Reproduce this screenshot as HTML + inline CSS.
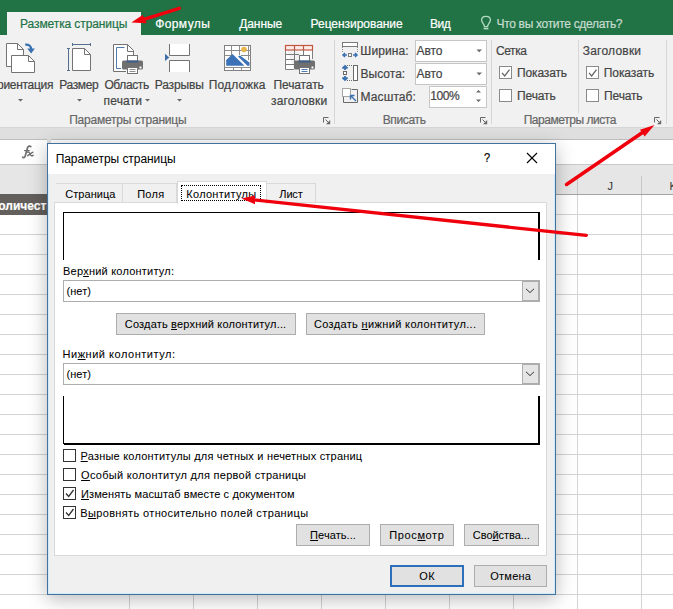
<!DOCTYPE html>
<html><head><meta charset="utf-8">
<style>
*{margin:0;padding:0;box-sizing:border-box}
html,body{width:673px;height:609px;overflow:hidden;background:#fff}
body{position:relative;font-family:"Liberation Sans",sans-serif;font-size:11.5px;color:#444}
.a{position:absolute}
.t{position:absolute;white-space:nowrap;line-height:14px;-webkit-text-stroke:0.2px currentColor}
svg{position:absolute;overflow:visible}
u{text-decoration:underline;text-decoration-thickness:1px;text-underline-offset:1px}
</style></head><body>

<!-- ===== green tab bar ===== -->
<div class="a" style="left:0;top:0;width:673px;height:35px;background:#217346"></div>
<div class="a" style="left:7px;top:12px;width:134px;height:23px;background:#f1f1f1"></div>
<div class="t" style="left:20.10px;top:16.80px;font-size:12px;color:#217346;letter-spacing:-0.101px;">Разметка страницы</div>
<div class="t" style="left:155.25px;top:17.00px;font-size:12px;color:#fff;letter-spacing:0.384px;">Формулы</div>
<div class="t" style="left:239.25px;top:17.00px;font-size:12px;color:#fff;letter-spacing:-0.1px;">Данные</div>
<div class="t" style="left:310.60px;top:16.80px;font-size:12px;color:#fff;letter-spacing:-0.045px;">Рецензирование</div>
<div class="t" style="left:430.00px;top:16.80px;font-size:12px;color:#fff;letter-spacing:-0.45px;">Вид</div>
<svg style="left:0;top:0" width="673" height="609"><path d="M484.4 26.6 C484.4 23.6 481.6 22.6 481.6 19.9 C481.6 17.6 483.6 16.3 486 16.3 C488.4 16.3 490.4 17.6 490.4 19.9 C490.4 22.6 487.6 23.6 487.6 26.6 Z" fill="none" stroke="#b4dcc1" stroke-width="1.3"/><path d="M483.6 28.6 H488.4" stroke="#b4dcc1" stroke-width="1.6"/></svg>
<div class="t" style="left:496.50px;top:16.50px;font-size:12px;color:#c8dccf;letter-spacing:-0.315px;">Что вы хотите сделать?</div>

<!-- ===== ribbon ===== -->
<div class="a" style="left:0;top:35px;width:673px;height:93px;background:#f1f1f1;border-bottom:1px solid #d6d6d6"></div>
<div class="a" style="left:0;top:128px;width:673px;height:12px;background:#dfdfdf"></div>


<!-- ribbon texts -->
<div class="t" style="left:-12.00px;top:77.60px;font-size:12px;color:#444;letter-spacing:-0.3px;">Ориентация</div>
<div class="t" style="left:59.30px;top:77.60px;font-size:12px;color:#444;letter-spacing:-0.36px;">Размер</div>
<div class="t" style="left:104.40px;top:77.60px;font-size:12px;color:#444;letter-spacing:-0.384px;">Область</div>
<div class="t" style="left:103.60px;top:93.60px;font-size:12px;color:#444;letter-spacing:0.16px;">печати</div>
<div class="t" style="left:154.65px;top:77.60px;font-size:12px;color:#444;letter-spacing:-0.116px;">Разрывы</div>
<div class="t" style="left:208.85px;top:77.60px;font-size:12px;color:#444;letter-spacing:0.101px;">Подложка</div>
<div class="t" style="left:273.50px;top:77.60px;font-size:12px;color:#444;letter-spacing:-0.115px;">Печатать</div>
<div class="t" style="left:271.05px;top:93.60px;font-size:12px;color:#444;letter-spacing:0.164px;">заголовки</div>
<div class="t" style="left:69.15px;top:112.90px;font-size:12px;color:#666;letter-spacing:-0.206px;">Параметры страницы</div>
<div class="t" style="left:360.35px;top:44.40px;font-size:12px;color:#444;letter-spacing:0.083px;">Ширина:</div>
<div class="t" style="left:360.60px;top:66.80px;font-size:12px;color:#444;letter-spacing:0px;">Высота:</div>
<div class="t" style="left:360.55px;top:89.80px;font-size:12px;color:#444;letter-spacing:0.101px;">Масштаб:</div>
<div class="t" style="left:382.65px;top:112.90px;font-size:12px;color:#666;letter-spacing:-0.35px;">Вписать</div>
<div class="a" style="left:414.5px;top:39.5px;width:72px;height:22px;background:#fff;border:1px solid #c6c6c6"></div>
<div class="a" style="left:414.5px;top:62.5px;width:72px;height:22px;background:#fff;border:1px solid #c6c6c6"></div>
<div class="a" style="left:428.5px;top:85.5px;width:58px;height:22px;background:#fff;border:1px solid #c6c6c6"></div>
<div class="t" style="left:416.60px;top:44.00px;font-size:12px;color:#444;letter-spacing:-0.066px;">Авто</div>
<div class="t" style="left:416.60px;top:67.00px;font-size:12px;color:#444;letter-spacing:-0.066px;">Авто</div>
<div class="t" style="left:430.25px;top:89.20px;font-size:12px;color:#444;letter-spacing:-0.45px;">100%</div>
<div class="t" style="left:496.05px;top:43.60px;font-size:12px;color:#444;letter-spacing:-0.45px;">Сетка</div>
<div class="t" style="left:517.00px;top:66.40px;font-size:12px;color:#444;letter-spacing:-0.143px;">Показать</div>
<div class="t" style="left:517.05px;top:88.60px;font-size:12px;color:#444;letter-spacing:-0.14px;">Печать</div>
<div class="t" style="left:582.70px;top:43.60px;font-size:12px;color:#444;letter-spacing:0.225px;">Заголовки</div>
<div class="t" style="left:603.80px;top:66.40px;font-size:12px;color:#444;letter-spacing:-0.086px;">Показать</div>
<div class="t" style="left:604.10px;top:88.60px;font-size:12px;color:#444;letter-spacing:-0.16px;">Печать</div>
<div class="t" style="left:523.70px;top:112.80px;font-size:12px;color:#666;letter-spacing:-0.45px;">Параметры листа</div>

<svg style="left:0;top:0" width="673" height="609" viewBox="0 0 673 609">
 <g fill="none" stroke-width="1">
  <!-- separators -->
  <path d="M334.5 40 V124 M491.5 40 V124 M578.5 40 V113 M666.5 40 V124" stroke="#d6d6d6"/>
  <!-- orientation -->
  <path d="M6.5 43.5 H17.5 L23.5 49.5 V66.5 H6.5 Z" fill="#fff" stroke="#737373"/>
  <path d="M17.5 43.5 V49.5 H23.5" stroke="#737373"/>
  <path d="M11.5 55.5 H28.5 L34.5 61.5 V72.5 H11.5 Z" fill="#fff" stroke="#737373"/>
  <path d="M28.5 55.5 V61.5 H34.5" stroke="#737373"/>
  <path d="M25.2 44.6 C28.8 44.2 31.2 45.8 31.2 49.5" stroke="#3a70b0" stroke-width="2.2"/>
  <path d="M27.3 48.6 L34.9 48.6 L31.1 53.6 Z" fill="#3a70b0" stroke="none"/>
  <!-- size -->
  <path d="M72.5 44.5 H90.5 M72.5 43 V46 M90.5 43 V46 M68.5 48.5 V70.5 M67 48.5 H70 M67 70.5 H70" stroke="#55708f"/>
  <path d="M72.5 48.5 H84.5 L90.5 54.5 V70.5 H72.5 Z" fill="#fff" stroke="#737373"/>
  <path d="M84.5 48.5 V54.5 H90.5" stroke="#737373"/>
  <!-- print area -->
  <path d="M126 71.5 H113.5 V44.5 H127.5 L133.5 50.5 V58" fill="#fff" stroke="#737373"/>
  <path d="M127.5 44.5 V51.5 H133.5" stroke="#737373"/>
  <path d="M124.5 47.5 H116.5 V68.5 H121" stroke="#4f7bb0"/>
  <rect x="127.5" y="55.5" width="10" height="6" fill="#fff" stroke="#737373"/>
  <rect x="122" y="60.5" width="21" height="9" rx="1.5" fill="#707070" stroke="none"/>
  <path d="M126.5 61.5 H138.5" stroke="#3d5f8a" stroke-width="2"/>
  <rect x="127.5" y="67.5" width="10" height="6" fill="#fff" stroke="#737373"/>
  <path d="M129.5 69.5 H135.5 M129.5 71.5 H135.5" stroke="#8d8d8d"/>
  <rect x="139.5" y="66.5" width="2" height="2" fill="#fff" stroke="none"/>
  <!-- breaks -->
  <path d="M169.5 44 V55.5 H189.5 V44" fill="#fff" stroke="#737373"/>
  <path d="M169.5 72 V60.5 H189.5 V72" fill="#fff" stroke="#737373"/>
  <path d="M165 53.8 L169.3 57.4 L165 61 Z" fill="#3d6fa8" stroke="none"/>
  <!-- background -->
  <rect x="224.5" y="45.5" width="26" height="25" fill="#fff" stroke="#808080"/>
  <path d="M231.5 45.5 V55 M239.5 45.5 V55 M248.5 45.5 V60 M224.5 50.5 H250.5 M224.5 55.5 H233 M241 55.5 H250.5 M224.5 67.5 H250.5 M233.5 67.5 V70.5 M241.5 67.5 V70.5" stroke="#8c8c8c"/>
  <path d="M226.2 60 L232.5 54 L244.5 65.8 H226.2 Z" fill="#3c72b8" stroke="none"/>
  <path d="M238 56.6 L240 55.4 L249.5 62.6 V65.8 H247.4 Z" fill="#3c72b8" stroke="none"/>
  <circle cx="244" cy="49.5" r="2.8" fill="#e8b54d" stroke="none"/>
  <!-- print titles -->
  <path d="M285.5 45.5 H312.5 V59 M285.5 45.5 V69.5 H294" stroke="#808080" fill="#fff"/>
  <rect x="285.5" y="45.5" width="27" height="4.5" fill="#fbeeea" stroke="#c4553e" stroke-width="1.2"/>
  <path d="M294.5 45.5 V50 M303.5 45.5 V50" stroke="#c4553e" stroke-width="1.2"/>
  <path d="M294.5 50 V62 M303.5 50 V56 M285.5 54.5 H299 M285.5 59.5 H294 M285.5 64.5 H294" stroke="#7a7a7a"/>
  <rect x="299.5" y="55.5" width="10" height="6" fill="#fff" stroke="#737373"/>
  <rect x="294" y="60.5" width="21" height="9" rx="1.5" fill="#707070" stroke="none"/>
  <path d="M298.5 61.5 H310.5" stroke="#3d5f8a" stroke-width="2"/>
  <rect x="299.5" y="67.5" width="10" height="6" fill="#fff" stroke="#737373"/>
  <path d="M301.5 69.5 H307.5 M301.5 71.5 H307.5" stroke="#4f7bb0"/>
  <rect x="311.5" y="66.5" width="2" height="2" fill="#fff" stroke="none"/>
  <!-- dropdown arrows -->
  <path d="M18 99 H23 L20.5 101.5 Z M77 99 H82 L79.5 101.5 Z M145 99 H150 L147.5 101.5 Z M177 99 H182 L179.5 101.5 Z" fill="#666" stroke="none"/>
  <path d="M476.5 49.5 H482 L479.2 52.3 Z M476.5 72.5 H482 L479.2 75.3 Z M476 92.5 H481 L478.5 90 Z M476 99.5 H481 L478.5 102 Z" fill="#666" stroke="none"/>
  <!-- launchers -->
  <path d="M323.5 122.5 V117.5 H328.5 M325.5 119.5 L328 122" stroke="#666"/><path d="M330.2 124.2 H326 L330.2 120 Z" fill="#666" stroke="none"/>
  <path d="M480.5 122.5 V117.5 H485.5 M482.5 119.5 L485 122" stroke="#666"/><path d="M487.2 124.2 H483 L487.2 120 Z" fill="#666" stroke="none"/>
  <path d="M654.5 122.5 V117.5 H659.5 M656.5 119.5 L659 122" stroke="#666"/><path d="M661.2 124.2 H657 L661.2 120 Z" fill="#666" stroke="none"/>
  <!-- fit icons -->
  <rect x="342.5" y="42.5" width="15" height="4" fill="#fff" stroke="#7a7a7a"/>
  <path d="M342.5 47 V52 M357.5 47 V52" stroke="#8a8a8a" stroke-dasharray="1 1"/>
  <rect x="348.5" y="53.5" width="3" height="3" fill="#fff" stroke="#7a7a7a"/>
  <path d="M343 55 H347 M345 53 L343 55 L345 57 M353 55 H357 M355 53 L357 55 L355 57" stroke="#3a70b0" stroke-width="1.5"/>
  <rect x="353.5" y="65.5" width="4" height="15" fill="#fff" stroke="#6a6a6a"/>
  <path d="M347 65.5 H352 M347 80.5 H352" stroke="#6a6a6a" stroke-dasharray="1 1"/>
  <rect x="343.5" y="71.5" width="3" height="3" fill="#fff" stroke="#6a6a6a"/>
  <path d="M345 66 V70 M342.5 68.5 L345 66 L347.5 68.5 M345 76 V80 M342.5 77.5 L345 80 L347.5 77.5" stroke="#3a6fb0" stroke-width="1.8"/>
  <path d="M343.5 97 V102.5 H357.5 V89.5 H351.5" fill="none" stroke="#6a6a6a"/>
  <rect x="342.5" y="88.5" width="8" height="8" fill="#fff" stroke="#555" stroke-dasharray="1 1"/>
  <path d="M356 101 L351 96 M350.5 99.5 V95.5 H354.5" stroke="#3a6fb0" stroke-width="1.4"/>
  <!-- checkboxes -->
  <rect x="499.5" y="66.5" width="12" height="12" fill="#fff" stroke="#8a8a8a"/>
  <rect x="499.5" y="89.5" width="12" height="12" fill="#fff" stroke="#8a8a8a"/>
  <rect x="586.5" y="66.5" width="12" height="12" fill="#fff" stroke="#8a8a8a"/>
  <rect x="586.5" y="89.5" width="12" height="12" fill="#fff" stroke="#8a8a8a"/>
  <path d="M502 72.8 L504.7 76 L509.5 69.6 M589 72.8 L591.7 76 L596.5 69.6" stroke="#666" stroke-width="1.3"/>
 </g>
</svg>


<!-- ===== formula bar ===== -->
<div class="a" style="left:0;top:139px;width:673px;height:26px;background:#fff;border-top:1px solid #bdbdbd;border-bottom:1px solid #c8c8c8"></div>
<div class="a" style="left:46.5px;top:139px;width:4px;height:26px;background:#dfdfdf"></div>
<svg style="left:0;top:0" width="673" height="609"><g fill="none" stroke="#6e6e6e" stroke-linecap="round"><path d="M30.8 146.6 C29.8 145.6 28.2 145.9 27.6 147.6 L25.2 156 C24.7 157.6 23.5 158 22.6 157.2" stroke-width="1.7"/><path d="M24.6 150.6 H29.2" stroke-width="1.3"/><path d="M27.6 152.2 C28.8 151.6 29.3 152.3 30 154 C30.7 155.7 31.6 156.2 33.2 155.3 M33 152.2 C31.8 152.6 29.5 154.5 27.7 155.7" stroke-width="1.4"/></g></svg>
<!-- ===== sheet ===== -->
<div class="a" style="left:0;top:165px;width:673px;height:30px;background:#e6e6e6;border-bottom:1px solid #a3a3a3"></div>
<div class="a" style="left:577px;top:176px;width:1px;height:18px;background:#c6c6c6"></div>
<div class="a" style="left:641px;top:176px;width:1px;height:18px;background:#c6c6c6"></div>
<div class="t" style="left:607.5px;top:178.5px;font-size:11px;color:#333;-webkit-text-stroke:0">J</div>
<div class="t" style="left:669.5px;top:178.5px;font-size:11px;color:#333;-webkit-text-stroke:0">K</div>
<div class="a" style="left:0;top:195px;width:673px;height:414px;background-image:linear-gradient(#d4d4d4 1px,transparent 1px);background-size:100% 20px;background-position:0 19px"></div>
<div class="a" style="left:0;top:195px;width:673px;height:414px;background-image:linear-gradient(90deg,#d4d4d4 1px,transparent 1px);background-size:64px 100%;background-position:1px 0"></div>
<div class="a" style="left:0;top:195px;width:129px;height:414px;background:#fff;background-image:linear-gradient(#d4d4d4 1px,transparent 1px);background-size:100% 20px;background-position:0 19px"></div>
<div class="a" style="left:0;top:194px;width:60px;height:20.5px;background:#635f5c"></div>
<div class="t" style="left:-9px;top:199px;font-size:12px;font-weight:bold;color:#fff">Количество</div>


<!-- ===== dialog ===== -->
<div class="a" style="left:47px;top:143px;width:509px;height:452px;background:#f0f0f0;border:1px solid #44729f;box-shadow:inset 0 0 0 1px #cfeaf8,0 4px 18px rgba(0,0,0,0.28)"></div>
<div class="a" style="left:48px;top:144px;width:507px;height:30px;background:#fff"></div>
<div class="t" style="left:55.65px;top:152.40px;font-size:12px;color:#000;letter-spacing:-0.054px;-webkit-text-stroke:0;">Параметры страницы</div>
<div class="t" style="left:484px;top:151px;font-size:13px;color:#000;line-height:13px;transform:scaleX(0.85);transform-origin:left">?</div>
<svg style="left:0;top:0" width="673" height="609"><path d="M527 153 L537 163 M537 153 L527 163" stroke="#000" stroke-width="1.1"/></svg>
<!-- tabs -->
<div class="a" style="left:56px;top:183px;width:67px;height:20px;border-top:1px solid #d9d9d9;background:#f0f0f0"></div>
<div class="a" style="left:122px;top:183px;width:55px;height:20px;border:1px solid #d9d9d9;border-bottom:none;background:#f0f0f0"></div>
<div class="a" style="left:265px;top:183px;width:51px;height:20px;border:1px solid #d9d9d9;border-bottom:none;background:#f0f0f0"></div>
<!-- panel -->
<div class="a" style="left:54px;top:202px;width:493px;height:354px;background:#fff;border:1px solid #d9d9d9"></div>
<div class="a" style="left:176.5px;top:180.5px;width:90px;height:23px;border:1px solid #d9d9d9;border-bottom:none;background:#fff"></div>
<div class="a" style="left:181px;top:185px;width:80px;height:16px;border:1px dotted #000"></div>
<div class="t" style="left:65.15px;top:186.80px;font-size:11px;color:#000;letter-spacing:0.071px;-webkit-text-stroke:0.05px currentColor;">Страница</div>
<div class="t" style="left:137.15px;top:186.80px;font-size:11px;color:#000;letter-spacing:0.3px;-webkit-text-stroke:0.05px currentColor;">Поля</div>
<div class="t" style="left:186.30px;top:186.50px;font-size:11px;color:#000;letter-spacing:0.28px;-webkit-text-stroke:0.05px currentColor;">Колонтитулы</div>
<div class="t" style="left:279.35px;top:186.80px;font-size:11px;color:#000;letter-spacing:-0.167px;-webkit-text-stroke:0.05px currentColor;">Лист</div>
<!-- header preview -->
<div class="a" style="left:63px;top:212px;width:477px;height:1px;background:#000"></div><div class="a" style="left:63px;top:212px;width:1px;height:48px;background:#000"></div><div class="a" style="left:538px;top:213px;width:2px;height:47px;background:#000"></div>
<div class="t" style="left:63.05px;top:264.40px;font-size:11px;color:#000;letter-spacing:0.217px;-webkit-text-stroke:0.05px currentColor;">Вер<u>х</u>ний колонтитул:</div>
<div class="a" style="left:63px;top:280px;width:477px;height:21.5px;background:#fff;border:1px solid #adadad"></div>
<div class="a" style="left:522px;top:281px;width:17px;height:20px;background:#e5e5e5;border:1px solid #adadad"></div>
<div class="t" style="left:66.40px;top:284.00px;font-size:11px;color:#000;letter-spacing:0.1px;-webkit-text-stroke:0.05px currentColor;">(нет)</div>
<svg style="left:0;top:0" width="673" height="609"><path d="M526 288.8 L530 292.6 L534 288.8" fill="none" stroke="#333" stroke-width="1"/></svg>
<div class="a" style="left:116px;top:313px;width:180px;height:21.5px;background:#e1e1e1;border:1px solid #adadad"></div>
<div class="a" style="left:306px;top:313px;width:179px;height:21.5px;background:#e1e1e1;border:1px solid #adadad"></div>
<div class="t" style="left:124.80px;top:316.90px;font-size:11px;color:#000;letter-spacing:0.179px;-webkit-text-stroke:0.05px currentColor;">Создать <u>в</u>ерхний колонтитул...</div>
<div class="t" style="left:313.90px;top:316.90px;font-size:11px;color:#000;letter-spacing:0.355px;-webkit-text-stroke:0.05px currentColor;">Создать <u>н</u>ижний колонтитул...</div>
<div class="t" style="left:62.55px;top:347.30px;font-size:11px;color:#000;letter-spacing:0.524px;-webkit-text-stroke:0.05px currentColor;">Ни<u>ж</u>ний колонтитул:</div>
<div class="a" style="left:63px;top:363px;width:477px;height:21.5px;background:#fff;border:1px solid #adadad"></div>
<div class="a" style="left:522px;top:364px;width:17px;height:20px;background:#e5e5e5;border:1px solid #adadad"></div>
<div class="t" style="left:66.40px;top:367.30px;font-size:11px;color:#000;letter-spacing:0.1px;-webkit-text-stroke:0.05px currentColor;">(нет)</div>
<svg style="left:0;top:0" width="673" height="609"><path d="M526 371.8 L530 375.6 L534 371.8" fill="none" stroke="#333" stroke-width="1"/></svg>
<!-- footer preview -->
<div class="a" style="left:63px;top:396px;width:1px;height:48px;background:#000"></div><div class="a" style="left:64px;top:443px;width:476px;height:2px;background:#000"></div><div class="a" style="left:538px;top:396px;width:2px;height:49px;background:#000"></div>
<!-- checkboxes -->
<svg style="left:0;top:0" width="673" height="609"><g fill="#fff" stroke="#333">
<rect x="63.5" y="449.5" width="12" height="12"/>
<rect x="63.5" y="468.5" width="12" height="12"/>
<rect x="63.5" y="487.5" width="12" height="12"/>
<rect x="63.5" y="506.5" width="12" height="12"/>
<path d="M66 493.5 L68.7 496.5 L73.5 490 M66 512.5 L68.7 515.5 L73.5 509" fill="none" stroke-width="1.3"/>
</g></svg>
<div class="t" style="left:80.60px;top:448.50px;font-size:11px;color:#000;letter-spacing:0.204px;-webkit-text-stroke:0.05px currentColor;"><u>Р</u>азные колонтитулы для четных и нечетных страниц</div>
<div class="t" style="left:81.05px;top:467.50px;font-size:11px;color:#000;letter-spacing:0.287px;-webkit-text-stroke:0.05px currentColor;"><u>О</u>собый колонтитул для первой страницы</div>
<div class="t" style="left:81.00px;top:486.50px;font-size:11px;color:#000;letter-spacing:0.114px;-webkit-text-stroke:0.05px currentColor;"><u>И</u>зменять масштаб вместе с документом</div>
<div class="t" style="left:80.20px;top:505.80px;font-size:11px;color:#000;letter-spacing:0.366px;-webkit-text-stroke:0.05px currentColor;">В<u>ы</u>ровнять относительно полей страницы</div>
<!-- bottom buttons -->
<div class="a" style="left:296px;top:524px;width:74px;height:21.5px;background:#e1e1e1;border:1px solid #adadad"></div>
<div class="a" style="left:380px;top:524px;width:74px;height:21.5px;background:#e1e1e1;border:1px solid #adadad"></div>
<div class="a" style="left:464px;top:524px;width:74.5px;height:21.5px;background:#e1e1e1;border:1px solid #adadad"></div>
<div class="t" style="left:310.10px;top:528.00px;font-size:11px;color:#000;letter-spacing:0.075px;-webkit-text-stroke:0.05px currentColor;"><u>П</u>ечать...</div>
<div class="t" style="left:389.35px;top:528.00px;font-size:11px;color:#000;letter-spacing:0.6px;-webkit-text-stroke:0.05px currentColor;">Прос<u>м</u>отр</div>
<div class="t" style="left:472.85px;top:527.70px;font-size:11px;color:#000;letter-spacing:-0.05px;-webkit-text-stroke:0.05px currentColor;">Сво<u>й</u>ства...</div>
<div class="a" style="left:390px;top:565px;width:74px;height:21.5px;background:#e1e1e1;border:2px solid #2d6fba"></div>
<div class="a" style="left:474px;top:565px;width:73px;height:21.5px;background:#e1e1e1;border:1px solid #adadad"></div>
<div class="t" style="left:419.20px;top:568.70px;font-size:11px;color:#000;letter-spacing:0.6px;-webkit-text-stroke:0.05px currentColor;">ОК</div>
<div class="t" style="left:490.30px;top:568.70px;font-size:11px;color:#000;letter-spacing:0.24px;-webkit-text-stroke:0.05px currentColor;">Отмена</div>


<!-- ===== red arrows ===== -->
<svg style="left:0;top:0" width="673" height="609"><g fill="#f0000c" stroke="#f0000c" stroke-linecap="round">
<path d="M179.3 8.3 L143 19.6" stroke-width="3.4" fill="none"/>
<path d="M131.3 22.6 L142.6 15 L146.8 23.2 Z" stroke="none"/>
<path d="M566.5 184.5 L642.5 132.5" stroke-width="3.5" fill="none"/>
<path d="M654.5 125 L640 129.8 L644.7 136.5 Z" stroke="none"/>
<path d="M586.3 235.4 L253 199.8" stroke-width="3.3" fill="none"/>
<path d="M241.4 198.5 L255 195.4 L255 204.3 Z" stroke="none"/>
</g></svg>

</body></html>
